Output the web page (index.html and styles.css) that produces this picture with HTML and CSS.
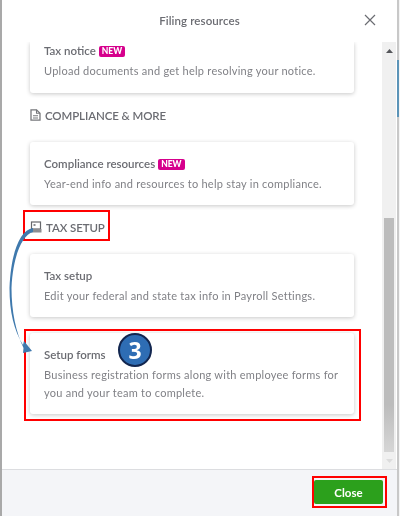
FILE: index.html
```html
<!DOCTYPE html>
<html lang="en">
<head>
<meta charset="utf-8">
<title>Filing resources</title>
<link rel="stylesheet" href="styles.css">
</head>
<body>
<div class="page">
  <div class="modal">
    <header class="head">
      <h1 class="title">Filing resources</h1>
      <svg class="x" width="12" height="12" viewBox="0 0 12 12"><path d="M1 1l10 10M11 1L1 11" stroke="#6b6c72" stroke-width="1.2" fill="none"/></svg>
    </header>
    <div class="body">
      <div class="content">
        <section class="card first">
          <div class="name">Tax notice <span class="new">NEW</span></div>
          <p class="desc">Upload documents and get help resolving your notice.</p>
        </section>
        <h2 class="sect">
          <svg class="ico" width="11" height="12" viewBox="0 0 11 12"><path d="M1 .8h5.5L10 4.2v7H1z" fill="#fff" stroke="#77787c" stroke-width="1.3"/><path d="M6.5 .8v3.4H10M3 6.8h5M3 9h5" stroke="#77787c" stroke-width="1.1" fill="none"/></svg>
          COMPLIANCE &amp; MORE
        </h2>
        <section class="card">
          <div class="name">Compliance resources <span class="new">NEW</span></div>
          <p class="desc">Year-end info and resources to help stay in compliance.</p>
        </section>
        <h2 class="sect">
          <svg class="ico" width="12" height="12" viewBox="0 0 12 12"><rect x="1.5" y="1" width="9" height="7" fill="#fff" stroke="#66676b" stroke-width="1.2"/><rect x=".5" y="8" width="11" height="3.5" fill="#8c8d91"/><rect x="3.5" y="3" width="2" height="2" fill="#8b8c90"/></svg>
          TAX SETUP
        </h2>
        <section class="card">
          <div class="name">Tax setup</div>
          <p class="desc">Edit your federal and state tax info in Payroll Settings.</p>
        </section>
        <section class="card last">
          <div class="name">Setup forms</div>
          <p class="desc">Business registration forms along with employee forms for you and your team to complete.</p>
        </section>
      </div>
      <div class="bar">
        <svg class="arr" width="7" height="4" viewBox="0 0 7 4"><path d="M3.5 0L7 4H0z" fill="#55565a"/></svg>
        <div class="thumb"></div>
        <svg class="arr" width="7" height="4" viewBox="0 0 7 4"><path d="M3.5 4L7 0H0z" fill="#dcdcdc"/></svg>
      </div>
    </div>
    <footer class="foot">
      <button class="close">Close</button>
    </footer>
  </div>
  <div class="edge-blue"></div>
  <div class="mark mark-head"></div>
  <div class="mark mark-card"></div>
  <div class="mark mark-btn"></div>
  <svg class="curve" width="40" height="140" viewBox="0 0 40 140"><path d="M33 6C20 8 11 30 9.5 66C9.5 90 14 108 23 123L24 119L32 129L23 131L23.5 126C16 110 11.5 90 11.5 66C13 34 22 13 33 10z" fill="#3f79ad"/></svg>
  <div class="step">3</div>
</div>
</body>
</html>
```

FILE: styles.css
```css
* { box-sizing: border-box; }
html, body { margin: 0; padding: 0; }
body { width: 400px; height: 516px; overflow: hidden; background: #fff; font-family: Lato, "Open Sans", sans-serif; color: #6b6c72; }
.page { position: relative; width: 400px; height: 516px; padding: 0 2px; filter: blur(.35px); background: linear-gradient(90deg, #a9a9a9 2px, #fff 2px, #fff 397px, #c8c8c8 397px, #c8c8c8 399px, #f4f4f4 399px); }
.modal { width: 395px; height: 516px; display: flex; flex-direction: column; background: #fff; }
.head { height: 42px; flex: none; display: flex; align-items: center; justify-content: center; position: relative; padding-bottom: 2px; }
.title { margin: 0; font-size: 11.5px; font-weight: 600; color: #6b6c72; letter-spacing: .1px; }
.x { position: absolute; right: 21px; top: 14px; }
.body { flex: 1; min-height: 0; display: flex; overflow: hidden; }
.content { flex: 1; padding: 0 28px; min-width: 0; }
.bar { width: 14px; flex: none; background: #f0f0f0; display: flex; flex-direction: column; align-items: center; padding: 7px 0 6px; margin-right: 1px; }
.thumb { width: 10px; height: 234px; margin-top: auto; margin-bottom: 7px; background: linear-gradient(#bcbcbc 80%, #d6d6d6); }
.card { background: #fff; border-radius: 3px; box-shadow: 0 1px 4px rgba(0,0,0,.22); padding: 15px 14px 0; height: 63px; }
.card.first { height: 51px; padding-top: 2px; border-radius: 0 0 3px 3px; }
.card.last { height: 81px; margin-top: 16px; }
.name { font-size: 11.5px; font-weight: 600; color: #6b6c72; line-height: 14px; display: flex; align-items: center; gap: 3px; }
.new { background: #d6008c; color: #fff; font-size: 8.5px; font-weight: 900; line-height: 11px; padding: 0 3px; border-radius: 2px; }
.desc { margin: 4px 0 0; font-size: 11px; line-height: 18px; color: #808186; letter-spacing: .25px; }
.sect { margin: 0; height: 49px; padding-bottom: 5px; display: flex; align-items: center; gap: 4px; font-size: 11.5px; font-weight: 600; color: #6b6c72; letter-spacing: -.1px; }
.foot { height: 47px; flex: none; background: #f4f5f8; border-top: 1px solid #dcdde0; display: flex; align-items: flex-start; justify-content: flex-end; padding: 10px 14px 0 0; }
.close { width: 69px; height: 24px; padding: 0; border: 0; border-radius: 2px; background: #2ca01c; color: #fff; font: 700 11.5px Lato, sans-serif; }
.edge-blue { position: absolute; left: 397px; top: 60px; width: 2px; height: 57px; background: #5b94b8; }
.mark { position: absolute; border: 2px solid #f00; }
.mark-head { left: 23px; top: 210px; width: 87px; height: 31px; }
.mark-card { left: 24px; top: 329px; width: 337px; height: 92px; }
.mark-btn { left: 312px; top: 476px; width: 75px; height: 32px; }
.curve { position: absolute; left: 0; top: 222px; }
.step { position: absolute; left: 118px; top: 333px; width: 34px; height: 34px; border-radius: 50%; background: #2e6db4; border: 2px solid #12264f; color: #fff; font: 700 23px/30px "Open Sans", sans-serif; text-align: center; }
```
